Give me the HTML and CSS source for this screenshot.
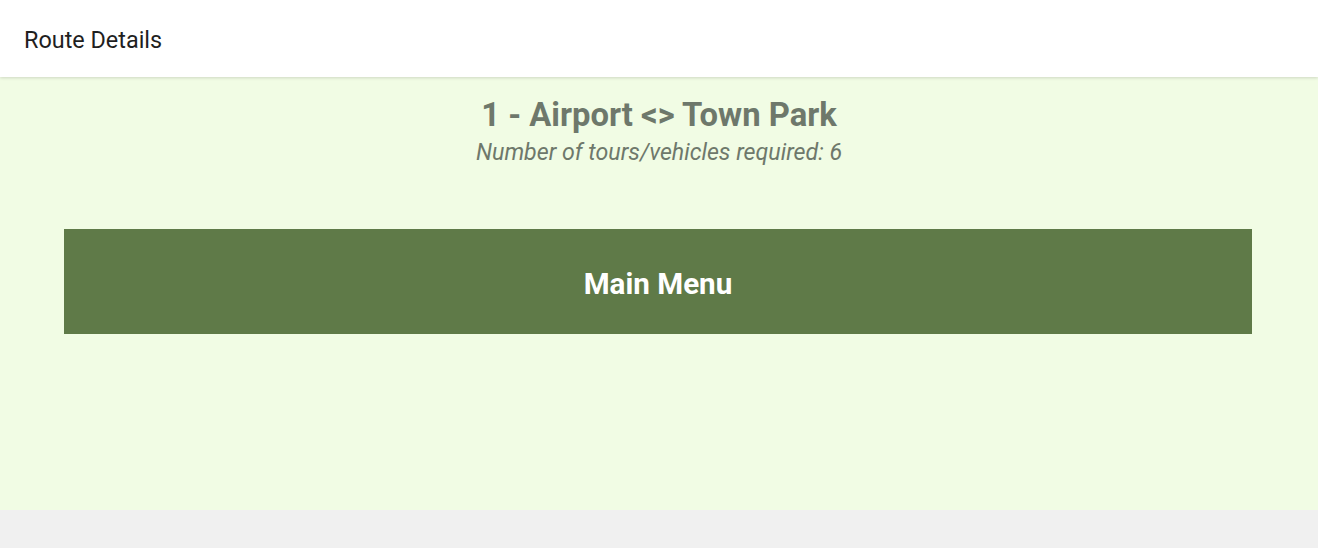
FILE: index.html
```html
<!DOCTYPE html>
<html>
<head>
<meta charset="utf-8">
<link rel="stylesheet" href="styles.css">
</head>
<body>
<header class="topbar"><span class="topbar-title">Route Details</span></header>
<main class="content">
  <h1 class="route-title">1 - Airport &lt;&gt; Town Park</h1>
  <p class="route-sub">Number of tours/vehicles required: 6</p>
  <div class="menu-wrap"><button class="menu-btn">Main Menu</button></div>
</main>
</body>
</html>
```
FILE: styles.css
```css
html, body { margin: 0; padding: 0; }
body { background: #f0f0f0; font-family: Roboto, "Noto Sans", sans-serif; height: 548px; overflow: hidden; }
.topbar {
  height: 77px; background: #fff; display: flex; align-items: center;
  padding: 2px 0 0 24px; box-sizing: border-box; box-shadow: 0 1px 3px rgba(0,0,0,0.15); position: relative; z-index: 1;
}
.topbar-title { font-size: 23.4px; color: #1f1f1f; }
.content { background: #f1fce4; height: 433px; display: flex; flex-direction: column; align-items: center; }
.route-title { margin: 18px 0 0; font-size: 32.8px; font-weight: 700; color: #6e786b; line-height: 40px; }
.route-sub { margin: 0; font-size: 23.2px; font-style: italic; color: #6e786b; line-height: 34px; }
.menu-wrap { align-self: stretch; padding: 0 66px 0 64px; margin-top: 60px; }
.menu-btn {
  display: block; width: 100%; height: 105px; padding: 4px 0 0; border: none; background: #5f7a48; color: #fff;
  font-family: Roboto, sans-serif; font-size: 29.6px; font-weight: 700;
}
```
